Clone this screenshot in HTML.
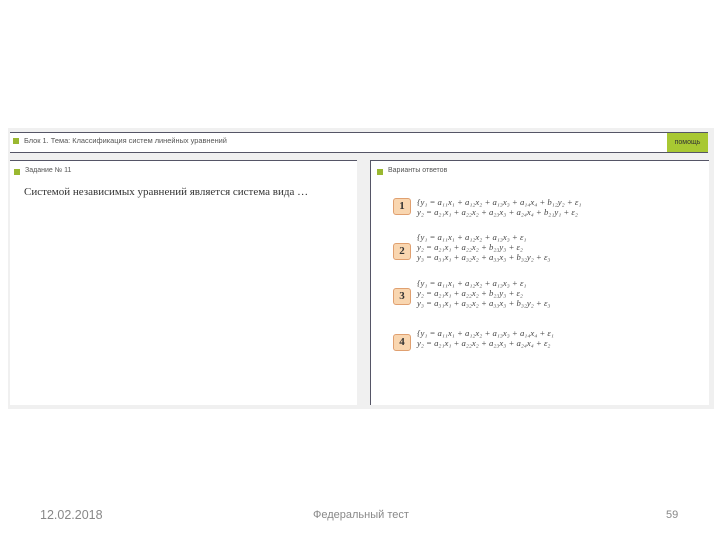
<!DOCTYPE html>
<html><head><meta charset="utf-8"><style>
body{margin:0;width:720px;height:540px;background:#fff;position:relative;overflow:hidden;font-family:"Liberation Sans",sans-serif}
.a{position:absolute}
.eq{font-family:"Liberation Serif",serif;font-style:italic;font-size:8.7px;color:#444;white-space:nowrap;line-height:10px}
.num{width:16px;height:15px;background:#f9d6b0;border:1px solid #e0a070;border-radius:3px;font:bold 11px "Liberation Serif",serif;text-align:center;line-height:15px;color:#333}
.sq{width:6px;height:6px;background:#9ab830}
.ft{font-size:11px;color:#888;top:509px}
</style></head><body>
<div class="a" style="left:8px;top:128px;width:706px;height:281px;background:#f0f0f0"></div>
<div class="a" style="left:10px;top:132px;width:698px;height:19px;background:#fff;border-top:1px solid #556;border-bottom:1px solid #556"></div>
<div class="a sq" style="left:13px;top:138px"></div>
<div class="a" style="left:24px;top:136px;font-size:7.4px;color:#555">Блок 1. Тема: Классификация систем линейных уравнений</div>
<div class="a" style="left:667px;top:133px;width:41px;height:19px;background:#a8c832;font-size:7px;color:#333;text-align:center;line-height:19px">помощь</div>
<div class="a" style="left:10px;top:160px;width:347px;height:244px;background:#fff;border-top:1px solid #556"></div>
<div class="a sq" style="left:14px;top:169px"></div>
<div class="a" style="left:25px;top:167px;font-size:7px;color:#555">Задание № 11</div>
<div class="a" style="left:24px;top:186px;font:11px 'Liberation Serif',serif;color:#333">Системой независимых уравнений является система вида …</div>
<div class="a" style="left:370px;top:160px;width:338px;height:244px;background:#fff;border-top:1px solid #556;border-left:1px solid #556"></div>
<div class="a sq" style="left:377px;top:169px"></div>
<div class="a" style="left:388px;top:167px;font-size:7px;color:#555">Варианты ответов</div>
<div class="a num" style="left:393px;top:198px">1</div>
<div class="a eq" style="left:417px;top:197px">{y₁ = a₁₁x₁ + a₁₂x₂ + a₁₃x₃ + a₁₄x₄ + b₁₂y₂ + ε₁<br>y₂ = a₂₁x₁ + a₂₂x₂ + a₂₃x₃ + a₂₄x₄ + b₂₁y₁ + ε₂</div>
<div class="a num" style="left:393px;top:243px">2</div>
<div class="a eq" style="left:417px;top:232px">{y₁ = a₁₁x₁ + a₁₂x₂ + a₁₃x₃ + ε₁<br>y₂ = a₂₁x₁ + a₂₂x₂ + b₂₃y₃ + ε₂<br>y₃ = a₃₁x₁ + a₃₂x₂ + a₃₃x₃ + b₃₂y₂ + ε₃</div>
<div class="a num" style="left:393px;top:288px">3</div>
<div class="a eq" style="left:417px;top:278px">{y₁ = a₁₁x₁ + a₁₂x₂ + a₁₃x₃ + ε₁<br>y₂ = a₂₁x₁ + a₂₂x₂ + b₂₃y₃ + ε₂<br>y₃ = a₃₁x₁ + a₃₂x₂ + a₃₃x₃ + b₃₂y₂ + ε₃</div>
<div class="a num" style="left:393px;top:334px">4</div>
<div class="a eq" style="left:417px;top:328px">{y₁ = a₁₁x₁ + a₁₂x₂ + a₁₃x₃ + a₁₄x₄ + ε₁<br>y₂ = a₂₁x₁ + a₂₂x₂ + a₂₃x₃ + a₂₄x₄ + ε₂</div>
<div class="a ft" style="left:40px;font-size:12.5px;top:508px">12.02.2018</div>
<div class="a ft" style="left:313px">Федеральный тест</div>
<div class="a ft" style="left:666px">59</div>
</body></html>
